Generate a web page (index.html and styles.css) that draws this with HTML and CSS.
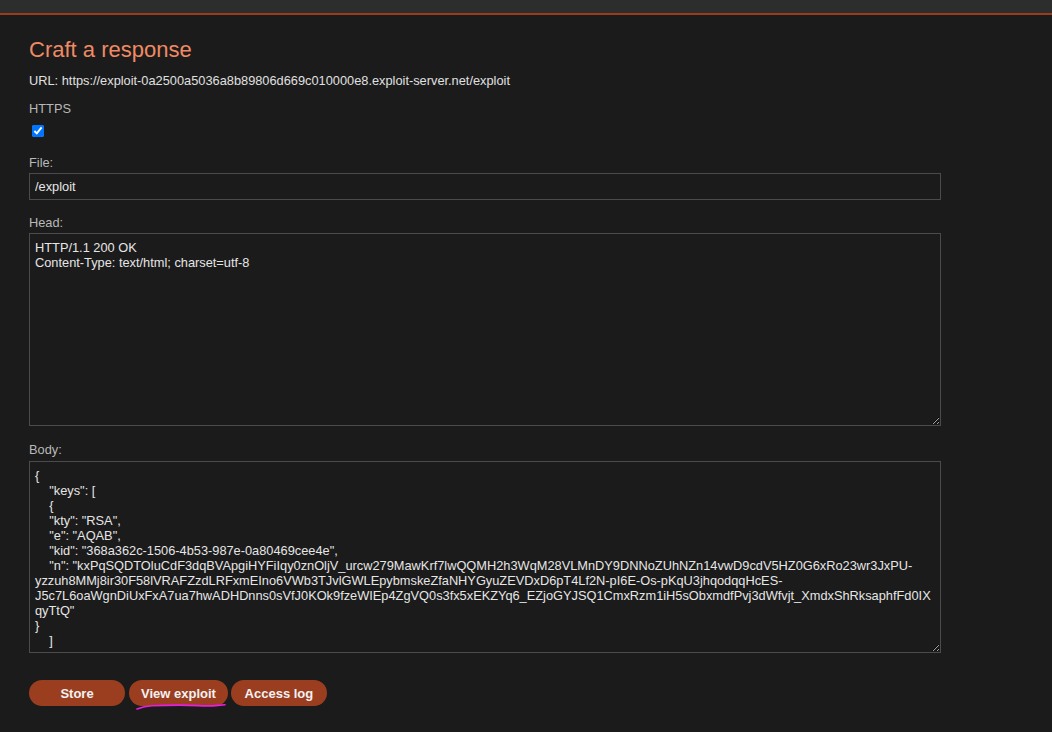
FILE: index.html
```html
<!DOCTYPE html>
<html lang="en">
<head>
  <meta charset="UTF-8">
  <meta name="viewport" content="width=device-width, initial-scale=1.0">
  <title>Exploit Server</title>
  <link rel="stylesheet" href="styles.css">
</head>
<body>
  <div class="topbar"></div>

  <section class="maincontainer">
    <h3 class="title">Craft a response</h3>

    <form id="feedbackForm" action="/" method="POST">
      <p class="url">URL: https://exploit-0a2500a5036a8b89806d669c010000e8.exploit-server.net/exploit</p>

      <label class="https-label">HTTPS</label>
      <input class="https-check" type="checkbox" name="urlIsHttps" checked>

      <label for="responseFile" class="field-label">File:</label>
      <input type="text" id="responseFile" class="text-input" name="responseFile" value="/exploit">

      <label for="responseHead" class="field-label head-label">Head:</label>
      <textarea id="responseHead" class="head-area" name="responseHead">HTTP/1.1 200 OK
Content-Type: text/html; charset=utf-8</textarea>

      <label for="responseBody" class="field-label body-label">Body:</label>
      <textarea id="responseBody" class="body-area" name="responseBody">{
    "keys": [
    {
    "kty": "RSA",
    "e": "AQAB",
    "kid": "368a362c-1506-4b53-987e-0a80469cee4e",
    "n": "kxPqSQDTOluCdF3dqBVApgiHYFiIqy0znOljV_urcw279MawKrf7lwQQMH2h3WqM28VLMnDY9DNNoZUhNZn14vwD9cdV5HZ0G6xRo23wr3JxPU-yzzuh8MMj8ir30F58lVRAFZzdLRFxmEIno6VWb3TJvlGWLEpybmskeZfaNHYGyuZEVDxD6pT4Lf2N-pI6E-Os-pKqU3jhqodqqHcES-J5c7L6oaWgnDiUxFxA7ua7hwADHDnns0sVfJ0KOk9fzeWIEp4ZgVQ0s3fx5xEKZYq6_EZjoGYJSQ1CmxRzm1iH5sObxmdfPvj3dWfvjt_XmdxShRksaphfFd0IXqyTtQ"
}
    ]</textarea>

      <div class="button-row">
        <button class="button" name="formAction" value="STORE" type="submit">Store</button>
        <span class="marked">
          <button class="button" name="formAction" value="VIEW_EXPLOIT" type="submit">View exploit</button>
          <!-- hand-drawn mark under "View exploit" -->
          <svg class="scribble" viewBox="0 0 96 12">
            <path d="M1 9 C 5 7.5, 9 6.2, 16 5.8 C 30 5.2, 50 5, 62 5.6 C 70 6.1, 76 6, 82 5.4 C 85 5.1, 87 4.9, 89 4.7" fill="none" stroke="#e81ee0" stroke-width="1.6" stroke-linecap="round"/>
          </svg>
        </span>
        <button class="button" name="formAction" value="ACCESS_LOG" type="submit">Access log</button>
      </div>
    </form>
  </section>
</body>
</html>
```

FILE: styles.css
```css
/* base */
body {
  margin: 0;
  padding: 0;
  min-height: 100vh;
  background-color: #1b1b1b;
  color: #dcdcdc;
  font-family: "Liberation Sans", Arial, sans-serif;
  font-size: 12.8px;
  line-height: 15px;
}
.topbar {
  height: 13px;
  background-color: #2c2e2e;
  border-bottom: 2px solid #9a3b1b;
}
.maincontainer {
  padding: 21px 29px 40px;
}
.title {
  margin: 0 0 9px;
  font-size: 22px;
  line-height: 28px;
  font-weight: normal;
  color: #f08a64;
}
.url {
  margin: 0 0 13px;
  color: #e0e0e0;
}
label {
  display: block;
  color: #b8b8b8;
}
.https-check {
  display: block;
  margin: 9px 0 18px 3px;
  width: 12px;
  height: 12px;
}
.field-label {
  margin-bottom: 3px;
}
.head-label {
  margin-top: 15px;
}
.body-label {
  margin-top: 16px;
  margin-bottom: 4px;
}
/* inputs */
.text-input,
textarea {
  display: block;
  box-sizing: border-box;
  width: 912px;
  margin: 0;
  padding: 6px 5px 5px;
  background-color: #1b1b1b;
  color: #e6e6e6;
  border: 1px solid #4b4b4b;
  border-radius: 0;
  font-family: "Liberation Sans", Arial, sans-serif;
  font-size: 12.8px;
  line-height: 15px;
  outline: none;
}
.text-input {
  height: 27px;
  padding: 0 5px;
}
.head-area {
  height: 193px;
}
.body-area {
  height: 192px;
  overflow: hidden;
}
/* buttons */
.button-row {
  margin-top: 27px;
  display: flex;
  gap: 3px;
}
.marked {
  position: relative;
  display: flex;
  margin-left: 1px;
}
.button {
  min-width: 96px;
  height: 26px;
  padding: 0 12px;
  border: none;
  border-radius: 13px;
  background-color: #9b3e1f;
  color: #f2f2f2;
  font-family: "Liberation Sans", Arial, sans-serif;
  font-size: 13px;
  font-weight: bold;
  cursor: pointer;
}
.button:hover {
  background-color: #b14a25;
}
.scribble {
  position: absolute;
  left: 7px;
  top: 20px;
  width: 96px;
  height: 12px;
  z-index: 1;
  pointer-events: none;
}
```
